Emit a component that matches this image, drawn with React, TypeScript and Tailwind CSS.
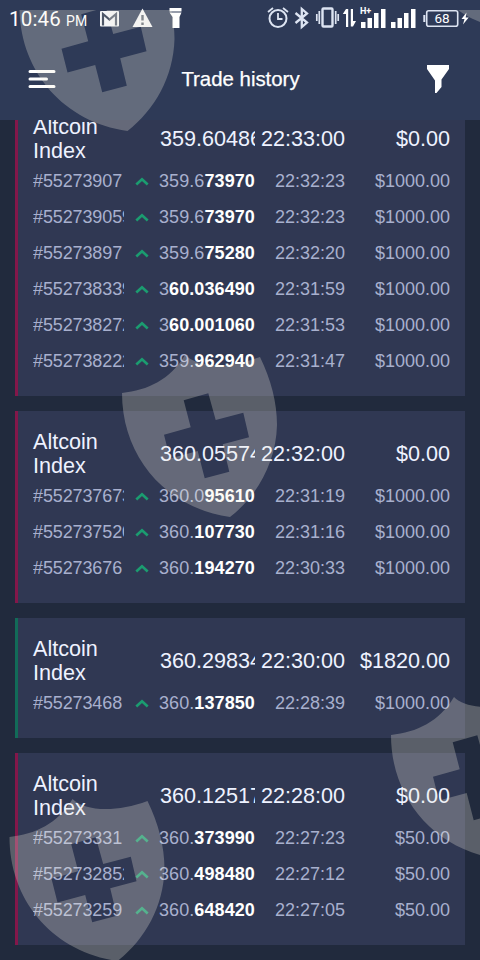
import React from "react";

type Trade = { id: string; dim: string; bold: string; time: string; amount: string };
type Group = { price: string; time: string; total: string; win?: boolean; trades: Trade[] };

const t = (id: string, dim: string, bold: string, time: string, amount: string): Trade => ({ id, dim, bold, time, amount });

const groups: Group[] = [
  {
    price: "359.604860", time: "22:33:00", total: "$0.00",
    trades: [
      t("#55273907", "359.6", "73970", "22:32:23", "$1000.00"),
      t("#552739059", "359.6", "73970", "22:32:23", "$1000.00"),
      t("#55273897", "359.6", "75280", "22:32:20", "$1000.00"),
      t("#552738339", "3", "60.036490", "22:31:59", "$1000.00"),
      t("#552738272", "3", "60.001060", "22:31:53", "$1000.00"),
      t("#552738222", "359.", "962940", "22:31:47", "$1000.00"),
    ],
  },
  {
    price: "360.055740", time: "22:32:00", total: "$0.00",
    trades: [
      t("#552737673", "360.0", "95610", "22:31:19", "$1000.00"),
      t("#552737520", "360.", "107730", "22:31:16", "$1000.00"),
      t("#55273676", "360.", "194270", "22:30:33", "$1000.00"),
    ],
  },
  {
    price: "360.298340", time: "22:30:00", total: "$1820.00", win: true,
    trades: [t("#55273468", "360.", "137850", "22:28:39", "$1000.00")],
  },
  {
    price: "360.125170", time: "22:28:00", total: "$0.00",
    trades: [
      t("#55273331", "360.", "373990", "22:27:23", "$50.00"),
      t("#552732852", "360.", "498480", "22:27:12", "$50.00"),
      t("#55273259", "360.", "648420", "22:27:05", "$50.00"),
    ],
  },
];

const cols = "grid grid-cols-[91px_35px_96px_90px_105px] items-center";

function Card({ g }: { g: Group }) {
  return (
    <section className={`border-l-[3px] bg-[#303853] pb-[17px] pt-[19px] pl-[15px] ${g.win ? "border-[#126b58]" : "border-[#83174a]"}`}>
      <div className={`${cols} h-[48px] text-[21.6px] leading-[24px] text-[#eef2ff]`}>
        <span className="col-span-2 w-[91px]">Altcoin<br />Index</span>
        <span className="overflow-hidden pl-px">{g.price}</span>
        <span className="text-right">{g.time}</span>
        <span className="text-right">{g.total}</span>
      </div>
      {g.trades.map((r) => (
        <div key={r.id} className={`${cols} h-[36px] text-[18px] leading-[24px] text-[#a8b0ce]`}>
          <span className="overflow-hidden tracking-[-0.12px]">{r.id}</span>
          <svg className="mt-px justify-self-center" width="14" height="9" viewBox="0 0 14 9" fill="none" stroke="#1b9c70" strokeWidth="2.6">
            <path d="M1.3 7.5 7 2.2 12.7 7.5" />
          </svg>
          <span className="overflow-hidden whitespace-nowrap tracking-[0.08px]">{r.dim}<b className="text-white">{r.bold}</b></span>
          <span className="text-right">{r.time}</span>
          <span className="text-right">{r.amount}</span>
        </div>
      ))}
    </section>
  );
}

const SHIELD =
  "M122 393C148 390 170 380 185 355C197 367 228 369 260 357C271 380 277 402 277 425C276 463 257 496 230 517C166 508 122 457 122 393Z" +
  "M183.7 400.3 190.7 427.3 164 434.7 170 458.5 197.7 451 204.7 478.3 229.3 471.7 222.7 444.3 249 437.3 243.3 412.7 215.7 420 208.3 393.3Z";

function Watermark() {
  return (
    <svg className="pointer-events-none absolute inset-0" width="480" height="960" fill="#f5f0e1" fillOpacity=".27" fillRule="evenodd">
      <clipPath id="safe"><rect y="10" width="480" height="950" /></clipPath>
      <g clipPath="url(#safe)">
        <path d={SHIELD} transform="translate(-102.5 -386)" />
        <path d={SHIELD} />
        <path d={SHIELD} transform="translate(269 342)" />
        <path d={SHIELD} transform="translate(-112.5 444)" />
        <path d="M458 10H480V22Q467 17 458 10Z" />
      </g>
    </svg>
  );
}

function StatusIcons() {
  return (
    <svg className="absolute inset-0" width="480" height="36" fill="none" stroke="#dde4f2" strokeWidth="2">
      <rect x="100" y="11" width="19" height="15.5" rx="1" fill="#f4f5f7" stroke="none" />
      <path d="M103 25.500V14L109.500 19.500 116 14V25.500" stroke="#4d5667" strokeWidth="2.200" />
      <path d="M142.500 8.500 152.500 27H132.500Z" fill="#f4f5f7" stroke="none" />
      <path d="M142.500 15V20.500M142.500 22.500V25" stroke="#59606d" strokeWidth="2.400" />
      <path d="M169.500 8H181.500V11.500H169.500ZM169.500 12.500H181.500L179.500 17V28H172.500V17Z" fill="#fff" stroke="none" />
      <circle cx="278" cy="18.500" r="8.500" />
      <path d="M278 13V19H282.500M268 12 273 8M288 12 283 8" strokeWidth="1.800" />
      <path d="M295.500 13 307 22.500 301.800 27V9L307 13.500 295.500 23" strokeWidth="2.300" />
      <rect x="322.500" y="8.500" width="10" height="18" rx="1" strokeWidth="2.400" />
      <path d="M319.300 11V24M316.800 14V21M335.700 11V24M338.200 14V21" strokeWidth="1.700" />
      <path d="M346 27V14H342.800L346 9H348.200V27ZM350.800 9H353V21H356L353 26.500H350.800Z" fill="#fff" stroke="none" />
      <path d="M361 22h4.500v6h-4.500zM367.500 18h4.500v10h-4.500zM374 13h4.500v15h-4.500zM381 9h4.500v19h-4.500zM391 22h4.500v6h-4.500zM397.500 18h4.500v10h-4.500zM404 13h4.500v15h-4.500zM411 9h4.500v19h-4.500z" fill="#fff" stroke="none" />
      <rect x="426.700" y="10.700" width="31" height="15.500" rx="2" strokeWidth="1.600" />
      <path d="M424.300 15V22" strokeWidth="2" />
      <path d="M466.500 12.500 461.500 19H464.500L463 24.500 468.700 17.500H465.700Z" fill="#fff" stroke="none" />
    </svg>
  );
}

export default function App() {
  return (
    <div className="relative h-[960px] w-[480px] overflow-hidden bg-[#212a3d] font-['Liberation_Sans',Arial,sans-serif]">
      <header className="relative z-10 flex h-[120px] flex-col bg-[#2e3a57] text-white">
        <div className="relative h-[36px] shrink-0 font-[Roboto,sans-serif]">
          <StatusIcons />
          <div className="flex items-baseline gap-[5px] pl-[9px] pt-[6px]">
            <span className="text-[20.500px] leading-[27px] tracking-[0.2px]">10:46</span>
            <span className="text-[14px]">PM</span>
          </div>
          <span className="absolute left-[360px] top-[6px] text-[9px] font-bold leading-[10px]">H+</span>
          <span className="absolute left-[427px] top-[11px] w-[30px] text-center text-[13.5px] leading-[15px]">68</span>
        </div>
        <div className="flex h-[86px] shrink-0 items-center justify-between pl-[28px] pr-[30px]">
          <svg width="28" height="20" viewBox="0 0 28 20" fill="none" stroke="#fff" strokeWidth="3" strokeLinecap="round">
            <path d="M2 2.500H26M2 10H18.500M2 17.500H26" />
          </svg>
          <h1 className="pr-px text-[20.400px] leading-[26px] [-webkit-text-stroke:0.25px_white]">Trade history</h1>
          <svg width="24" height="28" viewBox="0 0 24 28" fill="#fff"><path d="M1 0H23V4L15.500 14.500V22L10.500 28H9V15.500L1 4Z" /></svg>
        </div>
      </header>
      <main className="-mt-[24px] flex flex-col gap-[15px] px-[15px]">
        {groups.map((g) => <Card key={g.time} g={g} />)}
      </main>
      <div className="pointer-events-none absolute inset-0 z-20"><Watermark /></div>
    </div>
  );
}
